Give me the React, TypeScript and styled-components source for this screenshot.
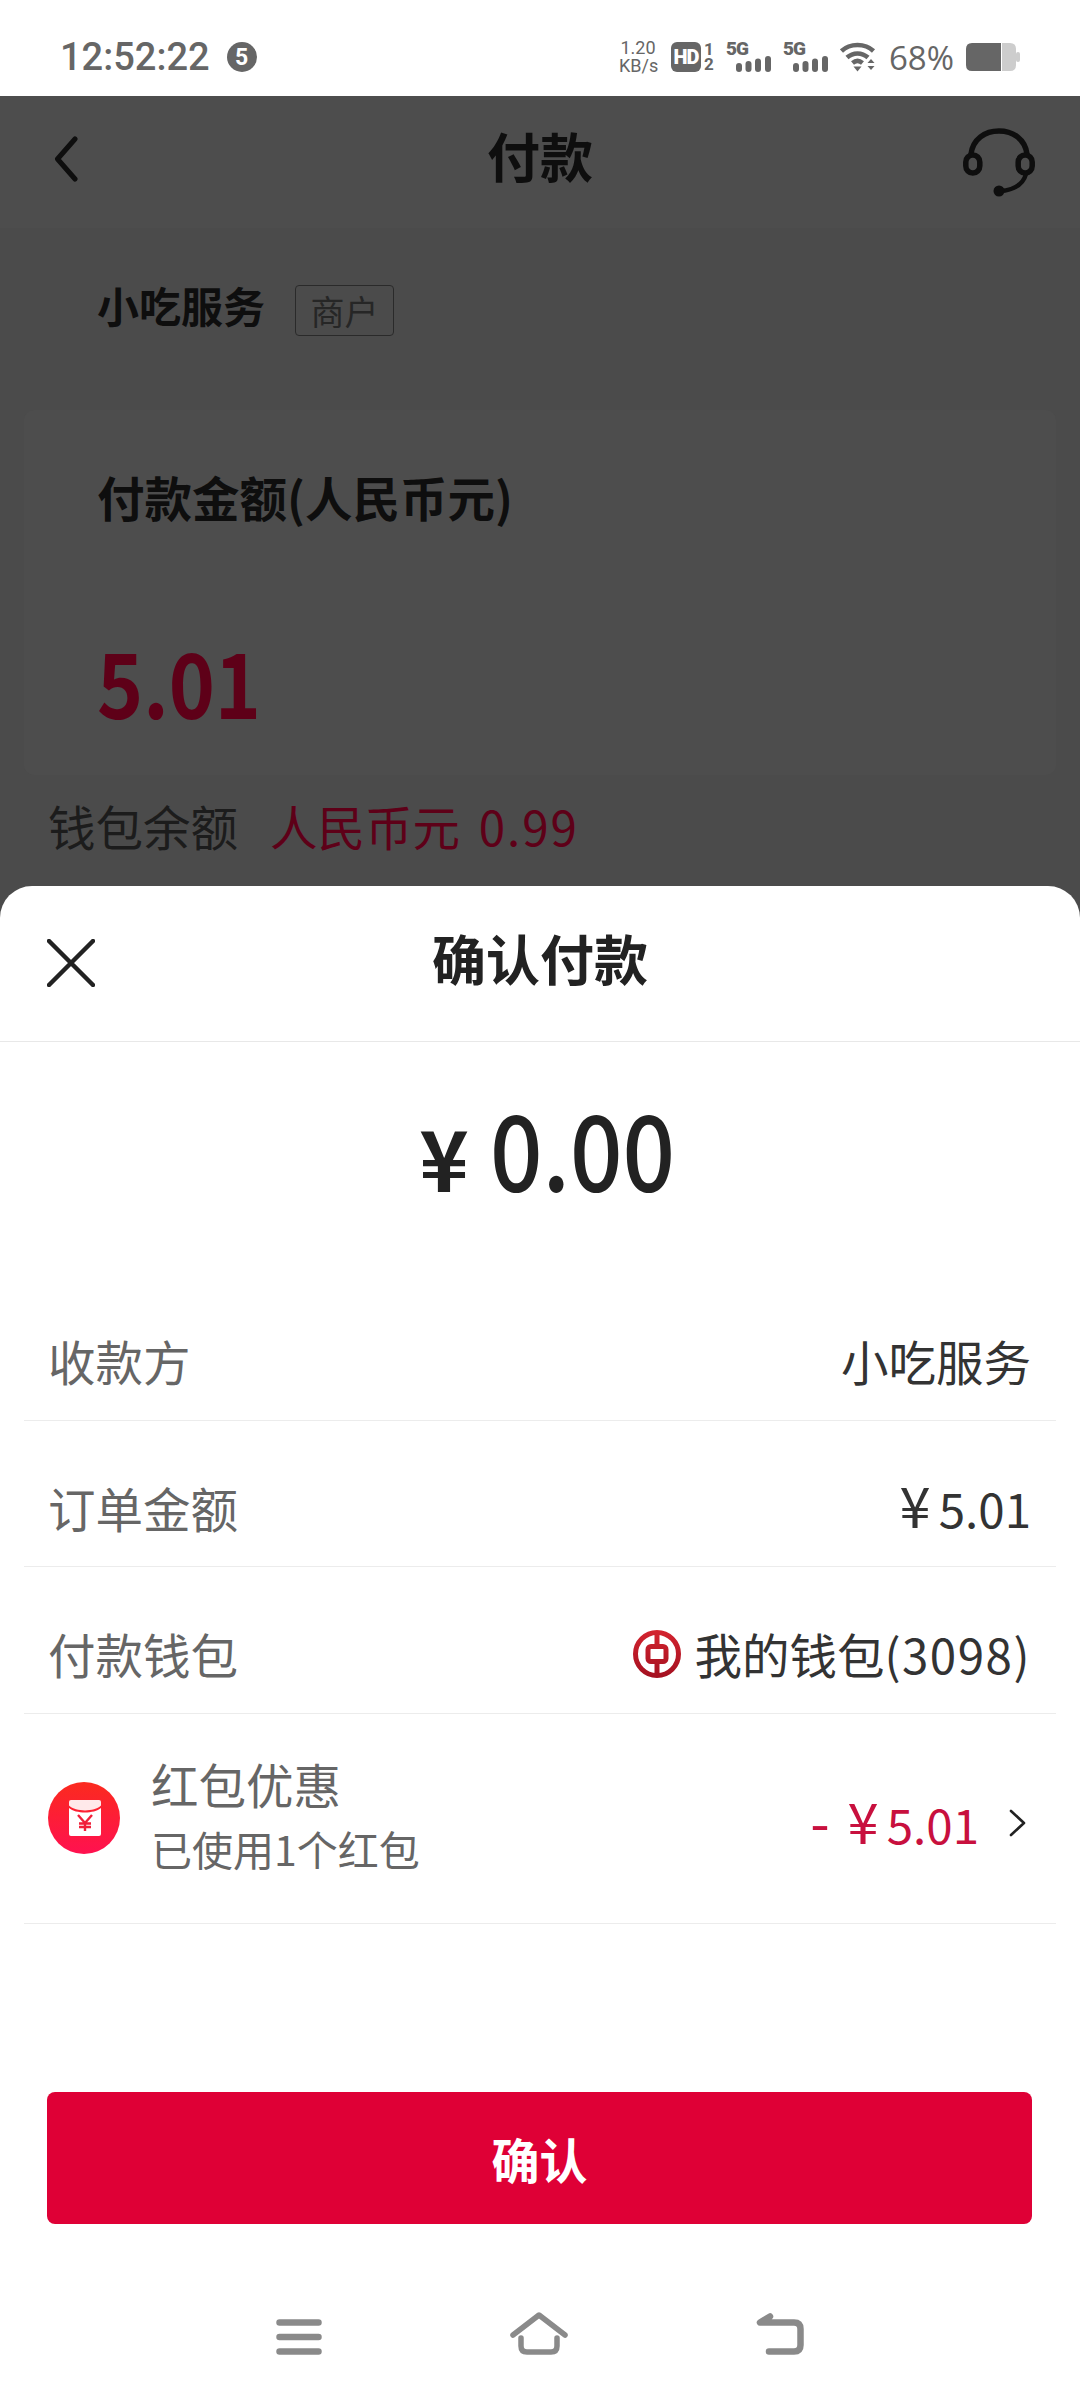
import React from 'react';
import styled, { createGlobalStyle } from 'styled-components';

const CJK = `"Noto Sans CJK SC", "Noto Sans", sans-serif`;

const GlobalStyle = createGlobalStyle`
  html, body {
    margin: 0;
    padding: 0;
    background: #fff;
    font-family: ${CJK};
  }
  * { box-sizing: border-box; }
`;

const Screen = styled.div`
  width: 1080px;
  height: 2400px;
  display: flex;
  flex-direction: column;
  overflow: hidden;
  background: #4b4b4b;
`;

/* ------------------------------- status bar ------------------------------- */

const StatusBar = styled.div`
  height: 96px;
  flex: none;
  background: #fff;
  display: flex;
  align-items: center;
  justify-content: space-between;
  padding: 18px 60px 0;
  color: #666;
  font-family: Roboto, sans-serif;
`;

const StatusLeft = styled.div`
  display: flex;
  align-items: center;
  gap: 17px;
  font-size: 38px;
  font-weight: 500;
`;

const NoticeBadge = styled.span`
  width: 30px;
  height: 30px;
  border-radius: 50%;
  background: #666;
  color: #fff;
  font-size: 23px;
  font-weight: 700;
  display: flex;
  align-items: center;
  justify-content: center;
`;

const StatusRight = styled.div`
  display: flex;
  align-items: center;
`;

const Speed = styled.div`
  width: 38px;
  font-size: 18px;
  line-height: 18px;
  text-align: center;
  white-space: nowrap;
`;

const HdBadge = styled.span`
  margin-left: 14px;
  width: 30px;
  height: 30px;
  border-radius: 6px;
  background: #666;
  color: #fff;
  font-size: 20px;
  font-weight: 900;
  letter-spacing: -1px;
  display: flex;
  align-items: center;
  justify-content: center;
`;

const SimNumbers = styled.div`
  width: 12px;
  margin-left: 2px;
  margin-right: 11px;
  font-size: 17px;
  line-height: 15px;
  font-weight: 700;
  text-align: center;
`;

const Signal = styled.div`
  position: relative;
  width: 45px;
  height: 30px;
  margin-right: 12px;
`;

const SignalLabel = styled.span`
  position: absolute;
  left: 0;
  top: -2px;
  font-size: 19px;
  line-height: 18px;
  font-weight: 900;
  letter-spacing: -1px;
`;

const Percent = styled.span`
  margin-left: 11px;
  margin-right: 12px;
  font-family: "Open Sans", Roboto, sans-serif;
  font-size: 33px;
`;

/* ------------------------------ dimmed screen ----------------------------- */

const Backdrop = styled.div`
  height: 790px;
  flex: none;
  display: flex;
  flex-direction: column;
  color: #0e0e0e;
`;

const AppBar = styled.header`
  height: 132px;
  flex: none;
  display: flex;
  align-items: center;
  justify-content: space-between;
  padding: 0 45px 0 54px;
  background: #4d4d4d;
  position: relative;
`;

const AppTitle = styled.h1`
  position: absolute;
  left: 0;
  right: 0;
  margin: 0;
  padding-bottom: 14px;
  text-align: center;
  font-size: 53px;
  font-weight: 700;
  line-height: 1;
`;

const Merchant = styled.div`
  height: 182px;
  flex: none;
  display: flex;
  align-items: center;
  gap: 30px;
  padding: 0 0 30px 97px;
  font-size: 42px;
  font-weight: 700;
`;

const MerchantTag = styled.span`
  width: 99px;
  height: 51px;
  margin-top: 12px;
  border: 1.5px solid #2a2a2a;
  border-radius: 4px;
  font-size: 34px;
  font-weight: 400;
  color: #262626;
  display: flex;
  align-items: center;
  justify-content: center;
`;

const AmountCard = styled.section`
  height: 365px;
  flex: none;
  margin: 0 24px;
  padding: 52px 73px 0;
  border-radius: 10px;
  background: #4d4d4d;
`;

const CardLabel = styled.div`
  font-size: 47.5px;
  font-weight: 700;
  line-height: 70px;
`;

const CardValue = styled.div`
  margin-top: 98px;
  font-size: 90px;
  line-height: 100px;
  font-weight: 700;
  color: #5e0018;
  transform: scaleX(0.87);
  transform-origin: left center;
`;

const Balance = styled.div`
  margin: 23px 0 0 48px;
  display: flex;
  gap: 32px;
  font-size: 47.5px;
  line-height: 56px;
  color: #1c1c1c;
`;

const BalanceValue = styled.span`
  color: #5e0018;
  word-spacing: 8px;
`;

const BalanceDigits = styled.span`
  letter-spacing: 2px;
`;

/* ------------------------------ payment sheet ----------------------------- */

const Sheet = styled.div`
  flex: 1;
  display: flex;
  flex-direction: column;
  background: #fff;
  border-radius: 32px 32px 0 0;
`;

const SheetHeader = styled.div`
  height: 156px;
  flex: none;
  position: relative;
  display: flex;
  align-items: center;
  padding: 0 0 2px 47px;
  border-bottom: 1.5px solid #e8e8e8;
`;

const SheetTitle = styled.h2`
  position: absolute;
  left: 0;
  right: 0;
  margin: 0;
  padding-bottom: 10px;
  text-align: center;
  font-size: 54px;
  font-weight: 700;
  line-height: 1;
  color: #222;
`;

const Total = styled.div`
  height: 232px;
  flex: none;
  display: flex;
  align-items: baseline;
  justify-content: center;
  gap: 21px;
  padding: 36px 0 0 14px;
  color: #222;
`;

const TotalSign = styled.span`
  font-size: 84px;
  font-weight: 700;
  line-height: 1;
`;

const TotalValue = styled.span`
  display: inline-block;
  width: 185px;
  font-size: 106px;
  font-weight: 500;
  line-height: 1.3;
  white-space: nowrap;
  transform: scaleX(0.87);
  transform-origin: left center;
`;

const List = styled.div`
  margin: 0 24px;
`;

const Row = styled.div<{ $tall?: boolean }>`
  height: ${(p) => (p.$tall ? 210 : 146.5)}px;
  display: flex;
  align-items: center;
  justify-content: space-between;
  padding: ${(p) => (p.$tall ? '0 25px 0 24px' : '28px 25px 0 24px')};
  border-bottom: 1.5px solid #ececec;
`;

const RowLabel = styled.span`
  font-size: 47.5px;
  color: #666;
`;

const RowValue = styled.span`
  display: flex;
  align-items: center;
  gap: 13px;
  font-size: 47.5px;
  color: #333;
`;

const Digits = styled.span`
  letter-spacing: 1.5px;
`;

const Money = styled.span`
  display: inline-flex;
  align-items: baseline;
  gap: 8px;
`;

const Yen = styled.span`
  font-size: 56px;
  line-height: 1;
`;

const Minus = styled.span`
  font-size: 56px;
  line-height: 1;
  margin-right: 10px;
`;

const CouponInfo = styled.div`
  display: flex;
  align-items: center;
  gap: 31px;
`;

const CouponText = styled.div`
  display: flex;
  flex-direction: column;
  gap: 6px;
  margin-top: -6px;
`;

const CouponTitle = styled.span`
  font-size: 47.5px;
  line-height: 60px;
  color: #666;
`;

const CouponNote = styled.span`
  font-size: 41px;
  line-height: 56px;
  color: #666;
`;

const Discount = styled.span`
  display: flex;
  align-items: center;
  gap: 30px;
  padding: 10px 5px 0 0;
  font-size: 47.5px;
  color: #c8103e;
`;

const ConfirmButton = styled.button`
  height: 132px;
  flex: none;
  margin: auto 48px 0 47px;
  border: 0;
  border-radius: 8px;
  background: #df0036;
  color: #fff;
  font-family: ${CJK};
  font-size: 48px;
  font-weight: 700;
`;

const NavBar = styled.nav`
  height: 176px;
  flex: none;
  display: flex;
  align-items: flex-end;
  justify-content: center;
  gap: 188px;
  padding-bottom: 45px;
`;

const BackButton = styled.span`
  display: flex;
  margin-top: -6px;
`;

/* -------------------------------- drawings -------------------------------- */

const BackIcon = () => (
  <svg width="24" height="46" viewBox="0 0 24 46" fill="none" stroke="#0e0e0e" strokeWidth="5" strokeLinecap="round" strokeLinejoin="round">
    <path d="M21 3 L3.5 23 L21 43" />
  </svg>
);

const HeadsetIcon = () => (
  <svg width="72" height="69" viewBox="0 0 72 69" fill="none" stroke="#0e0e0e" strokeWidth="5.5" strokeLinecap="round">
    <path d="M8 26 C10 11 22 3 36 3 C50 3 62 11 64 26" />
    <rect x="2.8" y="27" width="14" height="18" rx="7" />
    <rect x="55.2" y="27" width="14" height="18" rx="7" />
    <path d="M63 46 C60 57 50 62 37 63" strokeWidth="4.5" />
    <circle cx="36" cy="63" r="5.5" fill="#0e0e0e" stroke="none" />
  </svg>
);

const CloseIcon = () => (
  <svg width="48" height="48" viewBox="0 0 48 48" stroke="#222" strokeWidth="4.5" strokeLinecap="round">
    <path d="M2 2 L46 46 M46 2 L2 46" />
  </svg>
);

const BankIcon = () => (
  <svg width="48" height="48" viewBox="0 0 48 48" fill="none">
    <defs>
      <linearGradient id="bankRed" x1="0" y1="0" x2="0" y2="48" gradientUnits="userSpaceOnUse">
        <stop offset="0" stopColor="#d4242f" />
        <stop offset="1" stopColor="#a31020" />
      </linearGradient>
    </defs>
    <g stroke="url(#bankRed)" strokeWidth="5">
      <circle cx="24" cy="24" r="21.5" />
      <rect x="15" y="16.5" width="18" height="15" rx="3" />
      <path d="M24 3 V15 M24 33 V45" />
    </g>
  </svg>
);

const RedPacketIcon = () => (
  <svg width="72" height="72" viewBox="0 0 72 72">
    <defs>
      <linearGradient id="packetRed" x1="0" y1="0" x2="0" y2="1">
        <stop offset="0" stopColor="#fb2a1e" />
        <stop offset="1" stopColor="#ff1150" />
      </linearGradient>
    </defs>
    <circle cx="36" cy="36" r="36" fill="url(#packetRed)" />
    <path d="M21 20 Q21 18 23 18 H51 Q53 18 53 20 V23.5 C46 30 28 30 21 23.5 Z" fill="#fff" opacity="0.9" />
    <path d="M21 26 C28 32 46 32 53 26 V52 Q53 54 51 54 H23 Q21 54 21 52 Z" fill="#fff" />
    <path d="M30 33 L37 41 L44 33 M37 41 V49 M31 41.5 H43 M31 45 H43" fill="none" stroke="#f0203a" strokeWidth="2.4" />
  </svg>
);

const ChevronIcon = () => (
  <svg width="17" height="28" viewBox="0 0 17 28" fill="none" stroke="#222" strokeWidth="2.6" strokeLinecap="round" strokeLinejoin="round">
    <path d="M2 2 L15 14 L2 26" />
  </svg>
);

const MenuKey = () => (
  <svg width="46" height="36" viewBox="0 0 46 36" stroke="#8a8a8a" strokeWidth="6.5" strokeLinecap="round">
    <path d="M3.5 3.5 H42.5 M3.5 18 H42.5 M3.5 32.5 H42.5" />
  </svg>
);

const HomeKey = () => (
  <svg width="58" height="43" viewBox="0 0 58 43" fill="none" stroke="#8a8a8a" strokeWidth="5.5" strokeLinecap="round" strokeLinejoin="round">
    <path d="M3 23 L29 3 L55 23" />
    <path d="M11 26 V34 Q11 40 17 40 H41 Q47 40 47 34 V26" />
  </svg>
);

const BackKey = () => (
  <svg width="48" height="42" viewBox="0 0 48 42" fill="none" stroke="#8a8a8a" strokeWidth="6.5" strokeLinecap="round" strokeLinejoin="round">
    <path d="M14 3.5 L4 9.5 H38 Q44.5 9.5 44.5 16 V32 Q44.5 38.5 38 38.5 H13" />
  </svg>
);

const SignalBars = () => (
  <svg width="35" height="16" viewBox="0 0 35 16" fill="#666" style={{ position: 'absolute', right: 0, bottom: 0 }}>
    <rect x="0" y="7" width="6" height="9" rx="3" />
    <rect x="9.5" y="5" width="6" height="11" rx="3" />
    <rect x="19" y="2.5" width="6" height="13.5" rx="3" />
    <rect x="29" y="0" width="6" height="16" rx="3" />
  </svg>
);

const WifiIcon = () => (
  <svg width="38" height="30" viewBox="0 0 38 30" fill="none">
    <path d="M1.5 9 C10 1 25 1 33.5 9" stroke="#666" strokeWidth="4.5" />
    <path d="M7 15.5 C13 10 22 10 28 15.5" stroke="#666" strokeWidth="4.5" />
    <path d="M12.5 21 C16 18 19 18 22.5 21" stroke="#666" strokeWidth="4.5" />
    <path d="M13.5 24.5 H21.5 L17.5 29.5 Z" fill="#666" />
    <path d="M31 17 L34.5 21 H27.5 Z M27.5 24 H34.5 L31 28 Z" fill="#666" />
  </svg>
);

const BatteryIcon = () => (
  <svg width="54" height="28" viewBox="0 0 54 28">
    <path d="M36 0 H44 Q50 0 50 6 V22 Q50 28 44 28 H36 Z" fill="#cdcdcd" />
    <rect x="50" y="9" width="4" height="10" rx="2" fill="#cdcdcd" />
    <path d="M6 0 H35 V28 H6 Q0 28 0 22 V6 Q0 0 6 0 Z" fill="#666" />
  </svg>
);

const App = () => (
  <>
    <GlobalStyle />
    <Screen>
      <StatusBar>
        <StatusLeft>
          12:52:22
          <NoticeBadge>5</NoticeBadge>
        </StatusLeft>
        <StatusRight>
          <Speed>
            1.20
            <br />
            KB/s
          </Speed>
          <HdBadge>HD</HdBadge>
          <SimNumbers>
            1
            <br />2
          </SimNumbers>
          <Signal>
            <SignalLabel>5G</SignalLabel>
            <SignalBars />
          </Signal>
          <Signal>
            <SignalLabel>5G</SignalLabel>
            <SignalBars />
          </Signal>
          <WifiIcon />
          <Percent>68%</Percent>
          <BatteryIcon />
        </StatusRight>
      </StatusBar>

      <Backdrop>
        <AppBar>
          <BackButton>
            <BackIcon />
          </BackButton>
          <AppTitle>付款</AppTitle>
          <HeadsetIcon />
        </AppBar>
        <Merchant>
          小吃服务
          <MerchantTag>商户</MerchantTag>
        </Merchant>
        <AmountCard>
          <CardLabel>付款金额(人民币元)</CardLabel>
          <CardValue>5.01</CardValue>
        </AmountCard>
        <Balance>
          钱包余额
          <BalanceValue>
            人民币元 <BalanceDigits>0.99</BalanceDigits>
          </BalanceValue>
        </Balance>
      </Backdrop>

      <Sheet>
        <SheetHeader>
          <CloseIcon />
          <SheetTitle>确认付款</SheetTitle>
        </SheetHeader>
        <Total>
          <TotalSign>¥</TotalSign>
          <TotalValue>0.00</TotalValue>
        </Total>
        <List>
          <Row>
            <RowLabel>收款方</RowLabel>
            <RowValue>小吃服务</RowValue>
          </Row>
          <Row>
            <RowLabel>订单金额</RowLabel>
            <RowValue>
              <Money>
                <Yen>¥</Yen>
                5.01
              </Money>
            </RowValue>
          </Row>
          <Row>
            <RowLabel>付款钱包</RowLabel>
            <RowValue>
              <BankIcon />
              <span>
                我的钱包<Digits>(3098)</Digits>
              </span>
            </RowValue>
          </Row>
          <Row $tall>
            <CouponInfo>
              <RedPacketIcon />
              <CouponText>
                <CouponTitle>红包优惠</CouponTitle>
                <CouponNote>已使用1个红包</CouponNote>
              </CouponText>
            </CouponInfo>
            <Discount>
              <Money>
                <Minus>-</Minus>
                <Yen>¥</Yen>
                5.01
              </Money>
              <ChevronIcon />
            </Discount>
          </Row>
        </List>
        <ConfirmButton>确认</ConfirmButton>
        <NavBar>
          <MenuKey />
          <HomeKey />
          <BackKey />
        </NavBar>
      </Sheet>
    </Screen>
  </>
);

export default App;
